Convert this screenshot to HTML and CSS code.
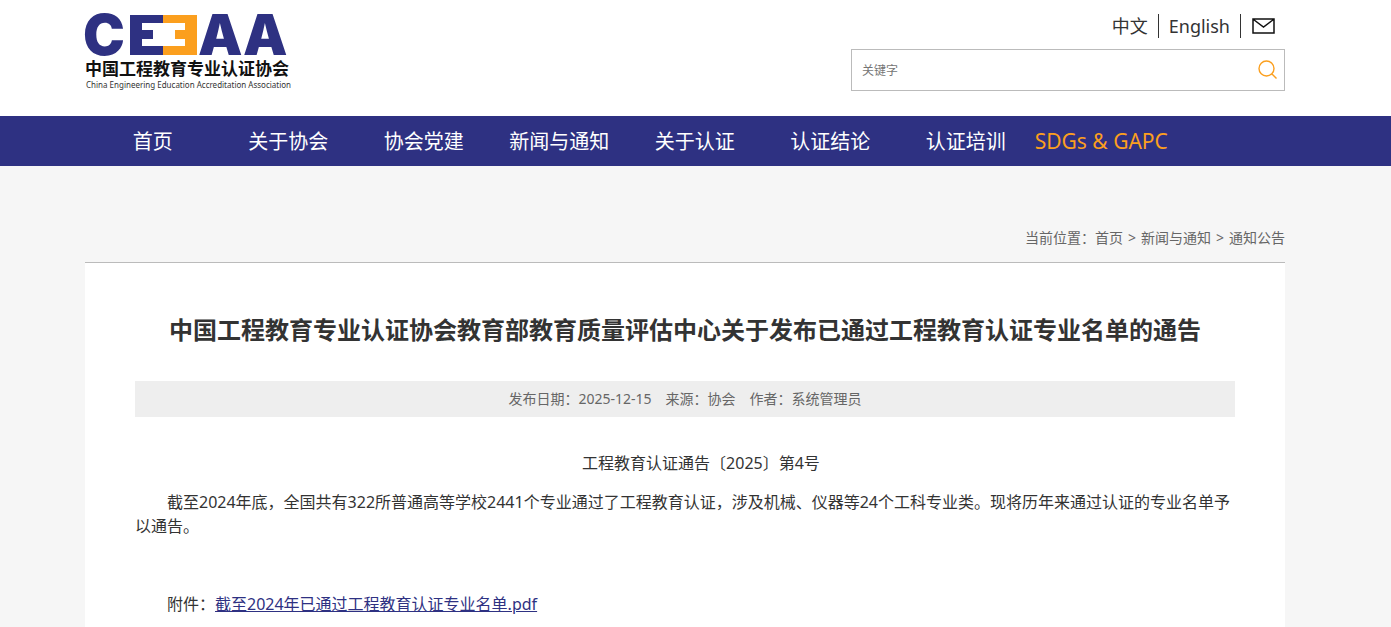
FILE: index.html
```html
<!DOCTYPE html>
<html lang="zh-CN">
<head>
<meta charset="utf-8">
<meta name="viewport" content="width=device-width, initial-scale=1">
<title>中国工程教育专业认证协会</title>
<link rel="stylesheet" href="styles.css">
</head>
<body>
<header class="band header">
  <div class="wrap header-inner">
    <a class="logo" href="#" aria-label="中国工程教育专业认证协会">
      <svg class="logo-mark" width="204" height="42" viewBox="0 0 204 42" aria-hidden="true">
        <text class="logo-letter" x="-2" y="41">C</text>
        <path fill="#2e3182" d="M45 1h34v40H45z"/>
        <path fill="#fb9f1e" d="M78 1h34v40H78z"/>
        <path fill="#fff" d="M57 9h43v7H90v9h10v7H57v-7h11v-9H57z"/>
        <text class="logo-letter" x="113" y="41">A</text>
        <text class="logo-letter" x="158" y="41">A</text>
      </svg>
      <span class="logo-cn">中国工程教育专业认证协会</span>
      <span class="logo-en">China Engineering Education Accreditation Association</span>
    </a>
    <div class="tools">
      <div class="langs">
        <a href="#">中文</a>
        <a href="#">English</a>
        <a class="mail" href="#" aria-label="邮箱">
          <svg width="23" height="16" viewBox="0 0 23 16" fill="none" stroke="#111" stroke-width="1.5"><path d="M1 1h21v14H1zM1.500 1.500l10 7.500 10-7.500"/></svg>
        </a>
      </div>
      <form class="search">
        <input type="text" placeholder="关键字" aria-label="关键字">
        <button type="button" aria-label="搜索">
          <svg width="20" height="20" viewBox="0 0 20 20" fill="none" stroke="#fb9f1e" stroke-width="1.400"><circle cx="8.500" cy="8.500" r="7.500"/><path d="M14 14l4.500 4.500"/></svg>
        </button>
      </form>
    </div>
  </div>
</header>
<nav class="band nav">
  <div class="wrap">
    <ul class="menu">
      <li><a href="#">首页</a></li>
      <li><a href="#">关于协会</a></li>
      <li><a href="#">协会党建</a></li>
      <li><a href="#">新闻与通知</a></li>
      <li><a href="#">关于认证</a></li>
      <li><a href="#">认证结论</a></li>
      <li><a href="#">认证培训</a></li>
      <li><a class="accent" href="#">SDGs &amp; GAPC</a></li>
    </ul>
  </div>
</nav>
<main class="band">
  <div class="wrap">
    <div class="crumbs"><span>当前位置：<a href="#">首页</a></span><span>&gt;</span><a href="#">新闻与通知</a><span>&gt;</span><a href="#">通知公告</a></div>
    <article class="article">
      <h1>中国工程教育专业认证协会教育部教育质量评估中心关于发布已通过工程教育认证专业名单的通告</h1>
      <div class="meta"><span>发布日期：2025-12-15</span><span>来源：协会</span><span>作者：系统管理员</span></div>
      <p class="number">工程教育认证通告〔2025〕第4号</p>
      <p>截至2024年底，全国共有322所普通高等学校2441个专业通过了工程教育认证，涉及机械、仪器等24个工科专业类。现将历年来通过认证的专业名单予以通告。</p>
      <p class="attachment">附件：<a href="#">截至2024年已通过工程教育认证专业名单.pdf</a></p>
    </article>
  </div>
</main>
</body>
</html>
```
FILE: styles.css
```css
* { box-sizing: border-box; }
body {
  margin: 0;
  background: #f6f6f6;
  color: #333;
  font: 16px/24px "Noto Sans", "Noto Sans CJK SC", sans-serif;
}
a { color: inherit; text-decoration: none; }
.band { padding-right: 21px; }
.wrap { max-width: 1200px; margin: 0 auto; }

.header { background: #fff; }
.header-inner {
  display: flex;
  justify-content: space-between;
  align-items: flex-start;
  min-height: 116px;
  padding: 14px 0 24px;
}
.logo { display: flex; flex-direction: column; width: 204px; white-space: nowrap; color: #111; }
.logo-mark { display: block; overflow: visible; }
.logo-letter { font: 900 56px Inter, sans-serif; fill: #2e3182; }
.logo-cn { padding-top: 1px; font-size: 17px; line-height: 24px; font-weight: 700; }
.logo-en { padding-left: 1px; font-size: 8px; line-height: 8px; color: #333; }

.tools { width: 434px; }
.langs { display: flex; justify-content: flex-end; font-size: 18px; }
.langs a { padding: 0 10px; }
.langs a + a { border-left: 1px solid #333; }
.langs .mail { display: flex; align-items: center; padding: 0 10px 0 11px; }
.search { display: flex; height: 42px; margin-top: 11px; border: 1px solid #bbb; background: #fff; }
.search input {
  flex: 1;
  min-width: 0;
  padding: 0 10px;
  border: 0;
  outline: 0;
  background: none;
  font: 12px "Noto Sans", "Noto Sans CJK SC", sans-serif;
}
.search input::placeholder { color: #757575; }
.search button { display: flex; align-items: center; padding: 0 6px; border: 0; background: none; }

.nav { background: #2e3182; }
.menu {
  display: grid;
  grid-template-columns: repeat(8, 1fr);
  max-width: 1084px;
  margin: 0;
  padding: 2px 0 0;
  list-style: none;
  text-align: center;
  font-size: 20px;
  line-height: 48px;
  color: #fff;
  white-space: nowrap;
}
.menu .accent { color: #fb9f1e; font-size: 21px; line-height: 24px; }

.crumbs {
  display: flex;
  justify-content: flex-end;
  gap: 5px;
  padding: 60px 0 12px;
  border-bottom: 1px solid #bbb;
  font-size: 14px;
  color: #666;
}
.article { padding: 49px 50px 11px; background: #fff; }
.article h1 { margin: 0; text-align: center; font-size: 24px; line-height: 36px; }
.meta {
  display: flex;
  justify-content: center;
  gap: 14px;
  margin: 33px 0 34px;
  background: #eee;
  color: #666;
  font-size: 14px;
  line-height: 36px;
}
.article p { margin: 0 0 15px; text-indent: 32px; }
.article .number { text-align: center; }
.article .attachment { margin: 54px 0 0; }
.attachment a { color: #2e3182; text-decoration: underline; }
```
